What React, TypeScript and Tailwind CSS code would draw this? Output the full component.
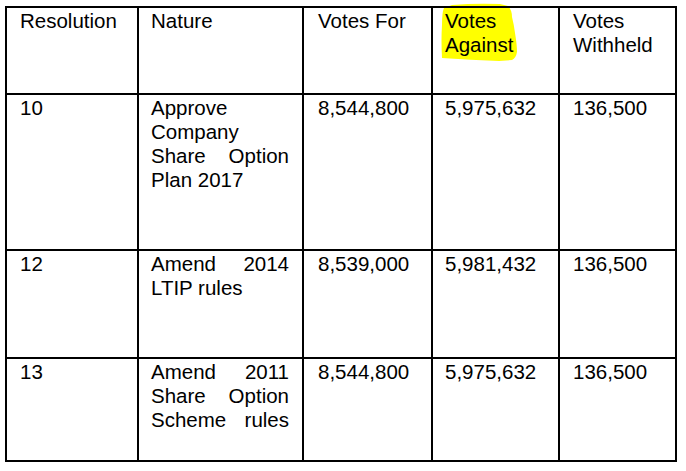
import React from 'react';

// --- DATE REZOLUȚII ---
const HEADERS = ['Resolution', 'Nature', 'Votes For', 'Votes Against', 'Votes Withheld'];

const ROWS = [
  { id: '10', nature: 'Approve Company Share Option Plan 2017', forV: '8,544,800', against: '5,975,632', withheld: '136,500', last: false },
  { id: '12', nature: 'Amend 2014 LTIP rules', forV: '8,539,000', against: '5,981,432', withheld: '136,500', last: false },
  { id: '13', nature: 'Amend 2011 Share Option Scheme rules', forV: '8,544,800', against: '5,975,632', withheld: '136,500', last: true },
];

const cell = 'border-r-2 border-b-2 border-black pt-[1px] pr-[13px]';
// padding stânga pe coloane
const pads = ['pl-[13px]', 'pl-[12px]', 'pl-[14px]', 'pl-[12px]', 'pl-[13px]'];

export default function App() {
  return (
    <div className="relative w-[686px] h-[471px] bg-white pl-[5px] pt-[6px] font-['Liberation_Sans',Arial,sans-serif] text-[20.5px] leading-[24px] text-black">
      {/* marker galben peste "Votes Against" */}
      <svg className="absolute left-0 top-0" width="686" height="471" viewBox="0 0 686 471">
        <path
          d="M444,8 L452,5 Q475,3 500,4 L508,6 Q512,10 512,17 Q514,25 515,33 Q517,45 517,52 Q516,58 512,60 L499,61 Q470,60 442,58 Q441,40 442,25 Q442,12 444,8 Z"
          fill="#ffff00"
        />
      </svg>

      <div className="relative grid grid-cols-[132px_165px_129px_127px_117px] grid-rows-[87px_156px_108px_103px] w-[672px] border-t-2 border-l-2 border-black">
        {HEADERS.map((h, i) => (
          <div key={h} className={`${cell} ${pads[i]}`}>{h}</div>
        ))}

        {ROWS.map((r) => (
          <React.Fragment key={r.id}>
            <div className={`${cell} ${pads[0]}`}>{r.id}</div>
            <div className={`${cell} ${pads[1]} text-justify ${r.last ? '[text-align-last:justify]' : ''}`}>{r.nature}</div>
            <div className={`${cell} ${pads[2]}`}>{r.forV}</div>
            <div className={`${cell} ${pads[3]}`}>{r.against}</div>
            <div className={`${cell} ${pads[4]}`}>{r.withheld}</div>
          </React.Fragment>
        ))}
      </div>
    </div>
  );
}
